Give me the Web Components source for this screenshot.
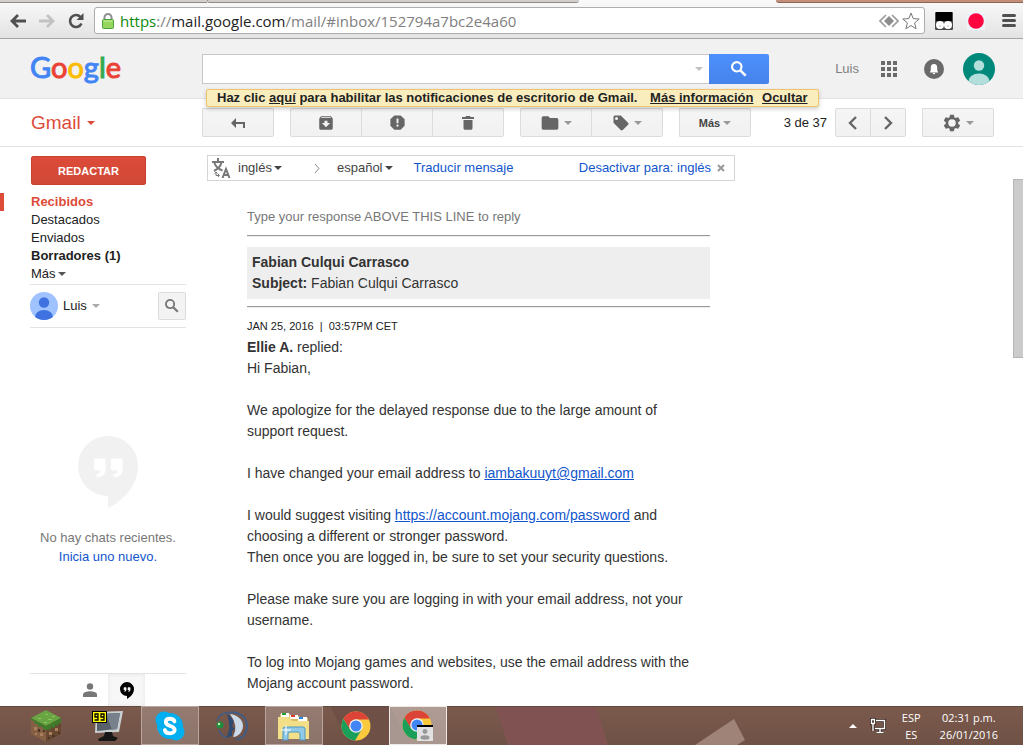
<!DOCTYPE html>
<html lang="es">
<head>
<meta charset="utf-8">
<title>Gmail</title>
<style>
    html, body { height: 100%; }
    body {
        margin: 0;
        overflow: hidden;
        background: #fff;
        color: #222;
        font: 13px/18px "Liberation Sans", Arial, sans-serif;
    }
</style>
</head>
<body>
<desk-screen>
    <browser-bar></browser-bar>
    <google-header></google-header>
    <mail-actions></mail-actions>
    <mail-body>
        <mail-sidebar slot="side"></mail-sidebar>
        <translate-bar></translate-bar>
        <mail-message></mail-message>
    </mail-body>
    <task-bar slot="bottom"></task-bar>
</desk-screen>

<script>
class Base extends HTMLElement {
    constructor() {
        super();
        this.attachShadow({ mode: 'open' });
    }
    connectedCallback() {
        this.shadowRoot.innerHTML = `<style>
            :host, * { box-sizing: border-box; }
            button { font: inherit; color: inherit; padding: 0; margin: 0; border: 0; background: none; cursor: pointer; }
            a { color: inherit; text-decoration: none; }
            svg { display: block; flex: none; }
        </style>` + this.render();
    }
}

const ICONS = {
    reply: ['0 0 14 10', '<path d="M5 0v4h9v6h-2V6H5v4L0 5z"/>'],
    archive: ['0 0 24 24', '<path d="M20.5 5.2l-1.4-1.7C18.9 3.2 18.5 3 18 3H6c-.5 0-.9.2-1.2.5L3.500 5.200C3.200 5.600 3 6 3 6.500V19c0 1.100.9 2 2 2h14c1.100 0 2-.9 2-2V6.500c0-.5-.2-.9-.5-1.300zM12 17.500L6.500 12H10V9h4v3h3.500zM5.100 5l.8-1h12l.9 1z"/>'],
    spam: ['0 0 24 24', '<path fill-rule="evenodd" d="M16 3H8L3 8v8l5 5h8l5-5V8zM10.800 7h2.400v6h-2.400zM12 14.600a1.400 1.400 0 1 1 0 2.800 1.400 1.400 0 0 1 0-2.800z"/>'],
    trash: ['0 0 24 24', '<path d="M6 19c0 1.100.9 2 2 2h8c1.100 0 2-.9 2-2V8H6zM20 4h-4.500l-1-1.500h-5L8.500 4H4v2.500h16z"/>'],
    folder: ['0 0 24 24', '<path d="M10 4H4c-1.100 0-2 .9-2 2v12c0 1.100.9 2 2 2h16c1.100 0 2-.9 2-2V8c0-1.100-.9-2-2-2h-8z"/>'],
    label: ['0 0 24 24', '<path fill-rule="evenodd" d="M21.400 11.600l-9-9C12 2.200 11.500 2 11 2H4c-1.100 0-2 .9-2 2v7c0 .5.2 1 .6 1.400l9 9c.8.8 2 .8 2.800 0l7-7c.8-.8.8-2 0-2.800zM6 8a2 2 0 1 1 0-4 2 2 0 0 1 0 4z"/>'],
    gear: ['0 0 24 24', '<path fill-rule="evenodd" d="M19.400 13c.1-.7.1-1.300 0-2l2.100-1.600c.2-.2.300-.4.100-.7l-2-3.400c-.1-.2-.4-.3-.6-.2l-2.500 1c-.5-.4-1.100-.7-1.700-1l-.4-2.600c0-.3-.2-.5-.4-.5h-4c-.3 0-.5.2-.5.400l-.4 2.700c-.6.200-1.200.6-1.700 1l-2.500-1c-.2-.1-.5 0-.6.200l-2 3.400c-.1.300-.1.500.1.700L4.500 11c-.1.700-.1 1.300 0 2l-2.100 1.600c-.2.2-.2.500-.1.700l2 3.400c.1.300.4.300.6.200l2.500-1c.5.400 1.100.8 1.700 1l.4 2.700c0 .2.200.4.500.4h4c.2 0 .4-.2.4-.4l.4-2.700c.6-.2 1.200-.6 1.700-1l2.500 1c.2.100.5.100.6-.2l2-3.400c.2-.2.100-.5-.1-.7zM12 16.500a4.500 4.500 0 1 1 0-9 4.500 4.500 0 0 1 0 9z"/>'],
    search: ['3 3 18 18', '<circle cx="9.500" cy="9.500" r="5.300" fill="none" stroke="currentColor" stroke-width="2.400"/><path d="M13.500 13.500l6 6" stroke="currentColor" stroke-width="2.800"/>'],
    prev: ['0 0 10 14', '<path d="M8 1L2 7l6 6" fill="none" stroke="currentColor" stroke-width="2.400"/>'],
    next: ['0 0 10 14', '<path d="M2 1l6 6-6 6" fill="none" stroke="currentColor" stroke-width="2.400"/>'],
    down: ['0 0 8 4', '<path d="M0 0h8L4 4z"/>'],
    person: ['0 0 14 14', '<circle cx="7" cy="3.500" r="3.200"/><path d="M0 14v-2.500C0 9 4 8.200 7 8.200s7 .8 7 3.300V14z"/>'],
    chat: ['0 0 60 72', '<path fill-rule="evenodd" d="M30 0a30 30 0 1 0 0 60v12c17-8 30-24 30-42A30 30 0 0 0 30 0zM18 22.500h8q1.500 0 1.500 1.500v10q0 7-9 7.500v-3.500q4 0 4-3.500H18q-2 0-2-2V24q0-1.500 2-1.500zm17 0h8q1.500 0 1.500 1.500v10q0 7-9 7.500v-3.500q4 0 4-3.500H35q-2 0-2-2V24q0-1.500 2-1.500z"/>'],
    apps: ['0 0 16 16', '<path d="M0 0h4v4H0zM6 0h4v4H6zM12 0h4v4h-4zM0 6h4v4H0zM6 6h4v4H6zM12 6h4v4h-4zM0 12h4v4H0zM6 12h4v4H6zM12 12h4v4h-4z"/>'],
    bell: ['0 0 20 20', '<circle cx="10" cy="10" r="10"/><path fill="#fff" d="M10 5c-2.400 0-3.200 1.600-3.200 3.600v2.600L6 13v.5h8V13l-.8-1.800V8.600C13.200 6.600 12.400 5 10 5zM8.800 14a1.200 1.200 0 0 0 2.400 0z"/>'],
    close: ['0 0 8 8', '<path d="M1 1l6 6M7 1L1 7" stroke="currentColor" stroke-width="2"/>']
};
function icon(name, width, height = width) {
    const [box, shape] = ICONS[name];
    return `<svg width="${width}" height="${height}" viewBox="${box}" fill="currentColor" aria-hidden="true">${shape}</svg>`;
}

customElements.define('desk-screen', class extends Base {
    render() {
        return `
            <style>
                :host { display: flex; flex-direction: column; height: 100vh; }
                .window { flex: 1; min-height: 0; display: flex; flex-direction: column; overflow: hidden; }
            </style>
            <div class="window"><slot></slot></div>
            <slot name="bottom"></slot>`;
    }
});

customElements.define('browser-bar', class extends Base {
    render() {
        return `
            <style>
                :host { display: block; flex: none; border-bottom: 1px solid #a5a5a5; background: linear-gradient(#f9f9f9, #e3e3e3); }
                .tabs { display: flex; height: 3px; }
                .tab { border-bottom: 1px solid #8f8b8a; background: #d3cdcb; }
                .tab.first { flex: 0 0 207px; }
                .tab.second { flex: 0 0 372px; border-left: 1px solid #9c9695; border-radius: 0 0 5px 4px; }
                .tab.frame { flex: 1; margin-left: 197px; border-color: #8c6556; background: #c38f7b; border-radius: 0 0 0 5px; }
                .bar { display: flex; align-items: center; height: 35px; padding: 0 4px 0 8px; }
                .bar > button { display: grid; place-items: center; flex: none; width: 20px; height: 24px; margin-right: 9px; color: #505050; }
                .bar > button:nth-of-type(3) { margin-right: 8px; }
                .url {
                    display: flex; align-items: center; flex: 1; min-width: 0; height: 27px; padding: 0 4px 0 7px;
                    border: 1px solid #adadad; border-radius: 3px; background: #fff; color: #808080;
                    font: 15px/24px "Open Sans", "Noto Sans", sans-serif; white-space: nowrap;
                }
                .url span { flex: 1; overflow: hidden; margin-left: 6px; }
                .url b { font-weight: 400; color: #222; }
                .url b.safe { color: #0b8a0b; }
                .url svg + svg { margin-left: 3px; }
                .bar > button.ext { width: 20px; margin: 0 0 0 9px; }
                .bar > button.ext + .ext { margin-left: 12px; }
                .bar > button.ext + .ext + .ext { margin-left: 13px; }
            </style>
            <div class="tabs"><div class="tab first"></div><div class="tab second"></div><div class="tab frame"></div></div>
            <div class="bar">
                <button aria-label="Atrás"><svg width="16" height="14" viewBox="0 0 16 14" fill="none" stroke="currentColor" stroke-width="2.800"><path d="M8 1L2 7l6 6M2 7h14"/></svg></button>
                <button aria-label="Adelante"><svg width="16" height="14" viewBox="0 0 16 14" fill="none" stroke="#c2c2c2" stroke-width="2.800"><path d="M8 1l6 6-6 6M14 7H0"/></svg></button>
                <button aria-label="Volver a cargar"><svg width="16" height="16" viewBox="0 0 16 16" fill="none" stroke="currentColor" stroke-width="2.600"><path d="M13.500 10.500A6 6 0 1 1 12.500 4"/><path d="M15.500 0v7H8.500z" fill="currentColor" stroke="none"/></svg></button>
                <div class="url">
                    <svg width="12" height="16" viewBox="0 0 12 16"><path d="M2.500 8V4.500a3.500 3.500 0 0 1 7 0V8" fill="none" stroke="#8f8f8f" stroke-width="2"/><rect x=".5" y="6.500" width="11" height="9" rx="1" fill="#96d65f" stroke="#4ca13b"/><path d="M1.500 8h9" stroke="#c4efa3"/></svg>
                    <span><b class="safe">https</b>://<b>mail.google.com</b>/mail/#inbox/152794a7bc2e4a60</span>
                    <svg width="20" height="14" viewBox="0 0 20 14"><path d="M7 1L1 7l6 6M13 1l6 6-6 6" fill="none" stroke="#999" stroke-width="1.600"/><path d="M10 2l5 5-5 5-5-5z" fill="#8d8d8d"/></svg>
                    <svg width="18" height="18" viewBox="0 0 18 18"><path d="M9 1l2.200 5.600 6 .4-4.600 3.900 1.500 5.900L9 13.500l-5.100 3.300 1.500-5.900L.8 7l6-.4z" fill="#fff" stroke="#777"/></svg>
                </div>
                <button class="ext" aria-label="Extensión"><svg width="18" height="18" viewBox="0 0 18 18"><rect width="18" height="18" rx="1" fill="#4b4b4b"/><path d="M1 0h16v9H1z" fill="#000"/><circle cx="5" cy="13" r="4" fill="#fff"/><circle cx="13" cy="13" r="4" fill="#fff"/><path d="M4 13h2v2H4zM12 13h2v2h-2z" fill="#dcdcdc"/></svg></button>
                <button class="ext" aria-label="Grabar"><svg width="18" height="18" viewBox="0 0 18 18"><path d="M0 0h18v18H0z" fill="#edf4fa"/><circle cx="9" cy="9" r="7.800" fill="#ff0440"/></svg></button>
                <button class="ext" aria-label="Menú"><svg width="14" height="13" viewBox="0 0 14 13"><path d="M1.500 1.500h11M1.500 6.500h11M1.500 11.500h11" stroke="#505050" stroke-width="3" stroke-linecap="round"/></svg></button>
            </div>`;
    }
});

customElements.define('google-header', class extends Base {
    render() {
        return `
            <style>
                :host { position: relative; display: flex; flex: none; align-items: center; height: 60px; padding-right: 28px; border-bottom: 1px solid #e3e3e3; background: #f1f1f1; }
                .logo { flex: 0 0 202px; padding: 0 0 3px 30px; font: 29px/36px Lato, "Open Sans", sans-serif; -webkit-text-stroke: 1px; }
                .b { color: #4285f4; } .r { color: #ea4335; } .y { color: #fbbc05; } .g { color: #34a853; }
                form { display: flex; flex: 0 1 567px; height: 30px; }
                .field { display: flex; flex: 1; align-items: center; padding-right: 6px; border: 1px solid #c8c8c8; border-right: 0; background: #fff; color: #c0c0c0; }
                input { flex: 1; min-width: 0; border: 0; outline: 0; padding: 0 8px; font: inherit; background: none; }
                .go { display: grid; place-items: center; width: 60px; border-radius: 0 2px 2px 0; background: linear-gradient(#4d90fe, #4683ea); color: #fff; }
                .user { display: flex; align-items: center; margin-left: auto; color: #6a6a6a; }
                .user a { margin-right: 22px; color: #808080; }
                .apps { margin-right: 27px; }
                .bell { margin-right: 19px; }
                .notice {
                    position: absolute; left: 206px; top: 50px; z-index: 1; padding: 0 10px; border: 1px solid #f0c36d; border-radius: 2px;
                    background: #f9edbe; box-shadow: 0 2px 4px rgba(0, 0, 0, .2); color: #222; font-weight: 700; line-height: 16px; white-space: nowrap;
                }
                .notice a { text-decoration: underline; }
                .notice .more { margin: 0 5px 0 9px; }
            </style>
            <a class="logo" href="#" aria-label="Google"><span class="b">G</span><span class="r">o</span><span class="y">o</span><span class="b">g</span><span class="g">l</span><span class="r">e</span></a>
            <form>
                <div class="field"><input type="text" aria-label="Buscar">${icon('down', 8, 4)}</div>
                <button class="go" type="button" aria-label="Buscar">${icon('search', 16)}</button>
            </form>
            <div class="user">
                <a href="#">Luis</a>
                <button class="apps" aria-label="Aplicaciones">${icon('apps', 16)}</button>
                <button class="bell" aria-label="Notificaciones">${icon('bell', 20)}</button>
                <button aria-label="Cuenta"><svg width="32" height="32" viewBox="0 0 32 32"><defs><clipPath id="c"><circle cx="16" cy="16" r="16"/></clipPath></defs><g clip-path="url(#c)"><path d="M0 0h32v32H0z" fill="#00897b"/><circle cx="16" cy="12.500" r="5.200" fill="#b2dfdb"/><ellipse cx="16" cy="28" rx="10.500" ry="7.500" fill="#b2dfdb"/></g></svg></button>
            </div>
            <div class="notice">Haz clic <a href="#">aquí</a> para habilitar las notificaciones de escritorio de Gmail. <a class="more" href="#">Más información</a> <a href="#">Ocultar</a></div>`;
    }
});

customElements.define('mail-actions', class extends Base {
    render() {
        return `
            <style>
                :host { display: flex; flex: none; align-items: center; gap: 16px; height: 48px; padding-right: 29px; border-bottom: 1px solid #e3e3e3; }
                .app { flex: 0 0 202px; display: flex; align-items: center; gap: 6px; margin-right: -16px; padding-left: 31px; color: #dd4b39; font-size: 19px; line-height: 28px; }
                .group { display: flex; }
                .group button {
                    display: flex; align-items: center; justify-content: center; gap: 4px; width: 72px; height: 29px;
                    border: 1px solid #dcdcdc; background: linear-gradient(#f5f5f5, #f1f1f1); color: #666; font-size: 11px; font-weight: 700;
                }
                .group button + button { margin-left: -1px; }
                .group button:first-child { border-radius: 2px 0 0 2px; }
                .group button:last-child { border-radius: 0 2px 2px 0; }
                .group.small button { width: 36px; }
                .group svg + svg, .more svg { color: #999; }
                .group .more { gap: 3px; color: #444; }
                .count { margin: 0 -8px 0 auto; white-space: nowrap; }
            </style>
            <button class="app">Gmail ${icon('down', 8, 4)}</button>
            <div class="group"><button aria-label="Responder">${icon('reply', 14, 10)}</button></div>
            <div class="group">
                <button aria-label="Archivar">${icon('archive', 18)}</button>
                <button aria-label="Spam">${icon('spam', 19)}</button>
                <button aria-label="Eliminar">${icon('trash', 18)}</button>
            </div>
            <div class="group">
                <button aria-label="Mover a">${icon('folder', 20)}${icon('down', 8, 4)}</button>
                <button aria-label="Etiquetas">${icon('label', 18)}${icon('down', 8, 4)}</button>
            </div>
            <div class="group"><button class="more">Más ${icon('down', 8, 4)}</button></div>
            <div class="count">3 de 37</div>
            <div class="group small">
                <button aria-label="Más reciente">${icon('prev', 10, 14)}</button>
                <button aria-label="Anterior">${icon('next', 10, 14)}</button>
            </div>
            <div class="group"><button aria-label="Configuración">${icon('gear', 20)}${icon('down', 8, 4)}</button></div>`;
    }
});

customElements.define('mail-body', class extends Base {
    render() {
        return `
            <style>
                :host { display: flex; flex: 1; min-height: 0; }
                .thread { flex: 1; min-width: 0; overflow: hidden; padding: 8px 5px 0; }
                .scroll { flex: 0 0 10px; padding-top: 32px; }
                .thumb { height: 179px; border: 1px solid #b5b5b5; border-right: 0; background: #cbcbcb; }
            </style>
            <slot name="side"></slot>
            <div class="thread"><slot></slot></div>
            <div class="scroll"><div class="thumb"></div></div>`;
    }
});

customElements.define('mail-sidebar', class extends Base {
    render() {
        return `
            <style>
                :host { display: flex; flex-direction: column; flex: 0 0 202px; padding-top: 9px; }
                .compose { flex: none; width: 115px; height: 29px; margin: 0 0 8px 31px; border: 1px solid #c8402f; border-radius: 2px; background: linear-gradient(#dd4b39, #d14836); color: #fff; font-size: 11px; font-weight: 700; }
                nav a { display: flex; align-items: center; gap: 2px; padding-left: 31px; }
                nav .on { padding-left: 27px; border-left: 4px solid #dd4b39; color: #dd4b39; font-weight: 700; }
                nav .bold { font-weight: 700; }
                nav svg { color: #555; }
                .me { display: flex; flex: none; align-items: center; height: 44px; margin: 1px 16px 0 30px; border: solid #e2e2e2; border-width: 1px 0; }
                .me .name { display: flex; align-items: center; gap: 5px; margin: 0 auto 0 5px; }
                .me .name svg { color: #aaa; }
                .me .find { display: grid; place-items: center; width: 28px; height: 28px; border: 1px solid #dcdcdc; border-radius: 2px; background: #f3f3f3; color: #777; }
                .empty { display: flex; flex: 1; flex-direction: column; align-items: center; justify-content: center; margin: 0 16px 0 30px; color: #777; line-height: 19px; white-space: nowrap; }
                .empty svg { margin-bottom: 20px; color: #f1f1f1; }
                .empty a { color: #15c; }
                .modes { display: flex; flex: none; justify-content: center; height: 33px; margin: 0 16px 0 30px; border-top: 1px solid #e2e2e2; color: #777; }
                .modes button { display: grid; place-items: center; width: 37px; }
                .modes .on { background: #f7f7f7; box-shadow: inset 0 0 4px #e4e4e4; color: #000; }
            </style>
            <button class="compose">REDACTAR</button>
            <nav>
                <a class="on" href="#">Recibidos</a>
                <a href="#">Destacados</a>
                <a href="#">Enviados</a>
                <a class="bold" href="#">Borradores (1)</a>
                <a href="#">Más ${icon('down', 8, 4)}</a>
            </nav>
            <div class="me">
                <svg width="28" height="28" viewBox="0 0 28 28"><defs><clipPath id="m"><circle cx="14" cy="14" r="14"/></clipPath></defs><g clip-path="url(#m)"><path d="M0 0h28v28H0z" fill="#a0c3ff"/><circle cx="14" cy="10.500" r="5.200" fill="#3f72e0"/><ellipse cx="14" cy="25" rx="9" ry="7" fill="#3f72e0"/></g></svg>
                <button class="name">Luis ${icon('down', 8, 4)}</button>
                <button class="find" aria-label="Buscar personas">${icon('search', 14)}</button>
            </div>
            <div class="empty">${icon('chat', 60, 72)}<span>No hay chats recientes.</span><a href="#">Inicia uno nuevo.</a></div>
            <div class="modes">
                <button aria-label="Contactos">${icon('person', 14)}</button>
                <button class="on" aria-label="Conversaciones">${icon('chat', 14, 17)}</button>
            </div>`;
    }
});

customElements.define('translate-bar', class extends Base {
    render() {
        return `
            <style>
                :host { display: flex; align-items: center; max-width: 528px; height: 26px; padding: 0 9px 0 4px; border: 1px solid #d5d5d5; color: #444; white-space: nowrap; }
                .lang { display: flex; align-items: center; gap: 2px; margin-left: 7px; }
                .to { margin: 0 10px 0 32px; color: #888; }
                a { margin-left: 21px; color: #15c; }
                .off { margin: 0 6px 0 auto; }
                .close { color: #999; }
            </style>
            <svg width="19" height="20" viewBox="0 0 19 20" fill="none" stroke="#777" stroke-width="2"><path d="M6 0v4M0 4h12M2 13Q8 10 9.500 4.500M2.500 5Q4 10 10.500 12.500"/><path d="M4 14v3.500h3M2.500 15.500L4 14l1.500 1.500M6 16l1.500 1.500L6 19" stroke-width="1"/><path d="M10.500 20l3.500-9 3.500 9M12 17h4.500"/></svg>
            <button class="lang">inglés ${icon('down', 8, 4)}</button>
            <svg class="to" width="6" height="9" viewBox="0 0 6 9"><path d="M1 0l4 4.500L1 9" fill="none" stroke="currentColor"/></svg>
            <button class="lang">español ${icon('down', 8, 4)}</button>
            <a href="#">Traducir mensaje</a>
            <a class="off" href="#">Desactivar para: inglés</a>
            <button class="close" aria-label="Cerrar">${icon('close', 8)}</button>`;
    }
});

customElements.define('mail-message', class extends Base {
    render() {
        return `
            <style>
                :host { display: block; max-width: 463px; margin: 25px 0 0 40px; color: #333; font-size: 14px; line-height: 21px; }
                p { margin: 0 0 21px; }
                .hint { margin: 0 0 8px; color: #777; font-size: 13px; }
                hr { height: 2px; margin: 0; border: 0; border-top: 1px solid #999; background: #eee; }
                .head { margin: 10px 0 7px; padding: 5px; background: #eee; }
                .date { margin: 8px 0 0; color: #222; font-size: 11px; white-space: pre; }
                a { color: #15c; text-decoration: underline; }
            </style>
            <p class="hint">Type your response ABOVE THIS LINE to reply</p>
            <hr>
            <div class="head"><b>Fabian Culqui Carrasco</b><br><b>Subject:</b> Fabian Culqui Carrasco</div>
            <hr>
            <p class="date">JAN 25, 2016  |  03:57PM CET</p>
            <p><b>Ellie A.</b> replied:<br>Hi Fabian,</p>
            <p>We apologize for the delayed response due to the large amount of<br>support request.</p>
            <p>I have changed your email address to <a href="#">iambakuuyt@gmail.com</a></p>
            <p>I would suggest visiting <a href="#">https://account.mojang.com/password</a> and<br>choosing a different or stronger password.<br>Then once you are logged in, be sure to set your security questions.</p>
            <p>Please make sure you are logging in with your email address, not your username.</p>
            <p>To log into Mojang games and websites, use the email address with the Mojang account password.</p>`;
    }
});

const CHROME = `<circle cx="15" cy="15" r="14.500" fill="#fbc93d"/>
    <path d="M2.400 7.800A14.500 14.500 0 0 1 28 8.500H15L8.500 18z" fill="#dc4437"/>
    <path d="M2.400 7.800A14.500 14.500 0 0 0 14 29.500l7-11.500H8.800z" fill="#1a9f5b"/>
    <circle cx="15" cy="15" r="6.800" fill="#f4f4f4"/><circle cx="15" cy="15" r="5.500" fill="#4285f4"/>`;

customElements.define('task-bar', class extends Base {
    render() {
        return `
            <style>
                :host { position: relative; display: flex; flex: none; align-items: center; height: 39px; padding: 0 25px 0 17px; background: #755548; color: #fff; font: 11px/17px "Open Sans", "Noto Sans", sans-serif; }
                .wall { position: absolute; inset: 0; width: 100%; height: 100%; }
                .apps, .tray { position: relative; display: flex; }
                .apps { gap: 4px; }
                .apps button { display: grid; place-items: center; width: 58px; height: 39px; border: 1px solid transparent; }
                .apps .open { border-color: #b9a59e; background: rgba(255, 255, 255, .2); }
                .apps .active { border-color: #efe9e6; background: rgba(255, 255, 255, .4); }
                .tray { align-items: center; margin-left: auto; text-align: center; white-space: nowrap; }
                .up { margin-right: 13px; }
                .lang { margin: 0 19px 0 16px; }
            </style>
            <svg class="wall" viewBox="0 0 1023 39" preserveAspectRatio="none">
                <defs><linearGradient id="w" x2="0" y2="1"><stop offset="0" stop-color="#7b5a4d"/><stop offset="1" stop-color="#6f5145"/></linearGradient></defs>
                <path d="M0 0h1023v39H0z" fill="url(#w)"/>
                <path d="M495 0h101l12 39H508z" fill="#805252"/><path d="M330 0h60l20 39h-60z" fill="#6f5046"/>
                <path d="M695 39l39-26 11 21-8 5z" fill="#a08378"/><path d="M0 0h1023v1H0z" fill="#62493f"/>
            </svg>
            <div class="apps">
                <button aria-label="Minecraft"><svg width="32" height="32" viewBox="0 0 32 32"><path d="M1 8l15 7v17L1 24z" fill="#866044"/><path d="M31 8l-15 7v17l15-8z" fill="#694832"/><path d="M16 0l15 8-15 8L1 8z" fill="#6aa544"/><path d="M1 8l15 8 15-8v5l-3 1v2l-3-1v3l-4-1v2l-5 1-4-2v-2l-4 1v-3l-3 0v-2l-4-2z" fill="#3f7b2b"/><path d="M8 8h3v1H8zM15 4h3v1h-3zM18 9h4v1h-4zM14 12h3v1h-3zM22 6h3v1h-3z" fill="#8fc660"/><path d="M4 17h3v3H4zM10 23h3v3h-3zM5 23h2v2H5zM19 22h3v3h-3zM25 18h3v3h-3z" fill="#aa8060"/><path d="M8 19h2v3H8zM13 20h2v2h-2zM22 25h3v2h-3zM18 27h2v2h-2zM28 22h2v2h-2z" fill="#4e3423"/></svg></button>
                <button aria-label="Monitor"><svg width="32" height="32" viewBox="0 0 32 32"><path d="M4 2l27-1-4 21-24 1z" fill="#c9ced1"/><path d="M5 4l23-1-3 16-20 2z" fill="#58606a"/><path d="M14 4l14-1-3 16-5 1z" fill="#77818c"/><path d="M13 22h7l1 4 5 2-3 3H7l-1-2 6-3z" fill="#171717"/><path d="M0 1h15v12H0z" fill="#000"/><path d="M1 2h13v10H1z" fill="#ff0"/><path d="M6 7H3V4h3v6H2.500M12 7H9V4h3v6H8.500" fill="none" stroke="#000" stroke-width="1.300"/></svg></button>
                <button class="open" aria-label="Skype"><svg width="30" height="30" viewBox="0 0 30 30"><circle cx="9" cy="9" r="8.500" fill="#00aff0"/><circle cx="21" cy="21" r="8.500" fill="#00aff0"/><circle cx="15" cy="15" r="13" fill="#00aff0"/><path d="M19.500 10.500C18.500 7 10.800 6.500 10.800 11c0 5 8.900 3 8.900 8 0 4.500-8.900 4.500-9.900 0" fill="none" stroke="#fff" stroke-width="3.800" stroke-linecap="round"/></svg></button>
                <button aria-label="TeamSpeak"><svg width="32" height="30" viewBox="0 0 32 30"><path d="M12 2c10-3 19 4 19 13S24 29 20 28" fill="none" stroke="#405c85" stroke-width="2"/><path d="M14 3c8 1 13 6 13 12S22 26 17 26q6-11-3-23z" fill="#cbd9e9"/><path d="M11 3c6 4 8 8 5 12l3 3-3 2v5l-6 2q6-9 1-24z" fill="#2f4a73"/><path d="M1 10C3 4 7 1 14 2M3 19q2 6 8 8" fill="none" stroke="#405c85" stroke-width="1.600"/><circle cx="4" cy="14" r="3.500" fill="#1f8d3c"/><circle cx="3" cy="13" r="1.200" fill="#b6f0b8"/></svg></button>
                <button class="open" aria-label="Explorador"><svg width="32" height="30" viewBox="0 0 32 30"><path d="M2 3h10l1 2h8l1 2h8v20H1z" fill="#d9bd60"/><path d="M3 2h8v5H3zM12 4h8v4h-8zM20 6h9v4h-9z" fill="#fff"/><path d="M4 2h4v2H4z" fill="#19a32b"/><path d="M13 4h4v2h-4z" fill="#dc3a2b"/><path d="M21 6h4v2h-4z" fill="#2588df"/><path d="M0 6h11l3 4h17v18H0z" fill="#f2df87"/><path d="M5 29V18q0-2 2-2h18q2 0 2 2v11h-5v-6q0-2-2-2h-8q-2 0-2 2v6z" fill="#91cae6" stroke="#4c9ac4"/><path d="M8 14v10M3 19h10" stroke="#fff"/></svg></button>
                <button aria-label="Chrome"><svg width="30" height="30" viewBox="0 0 30 30">${CHROME}</svg></button>
                <button class="open active" aria-label="Chrome, Gmail"><svg width="32" height="32" viewBox="0 0 32 32">${CHROME}<path d="M15 15h16v16H15z" fill="#e2e2e2"/><path d="M15 15h16v2H15z" fill="#000"/><circle cx="23" cy="21.500" r="2.400" fill="#999"/><ellipse cx="23" cy="27.500" rx="4.500" ry="2.200" fill="#999"/></svg></button>
            </div>
            <div class="tray">
                <svg class="up" width="8" height="4" viewBox="0 0 8 4"><path d="M4 0l4 4H0z" fill="#fff"/></svg>
                <svg width="16" height="16" viewBox="0 0 16 16" fill="none" stroke="#2f211c" stroke-width="3"><path d="M6 2.500h8.500v8H5M10 11v3M6.500 14.500h7M1.500 1.500h3v4h-3zM3 6v7"/><path stroke="#fff" stroke-width="1.400" d="M6 2.500h8.500v8H5M10 11v3M6.500 14.500h7M1.500 1.500h3v4h-3zM3 6v7"/></svg>
                <div class="lang">ESP<br>ES</div>
                <div>02:31 p.m.<br>26/01/2016</div>
            </div>`;
    }
});
</script>
</body>
</html>
